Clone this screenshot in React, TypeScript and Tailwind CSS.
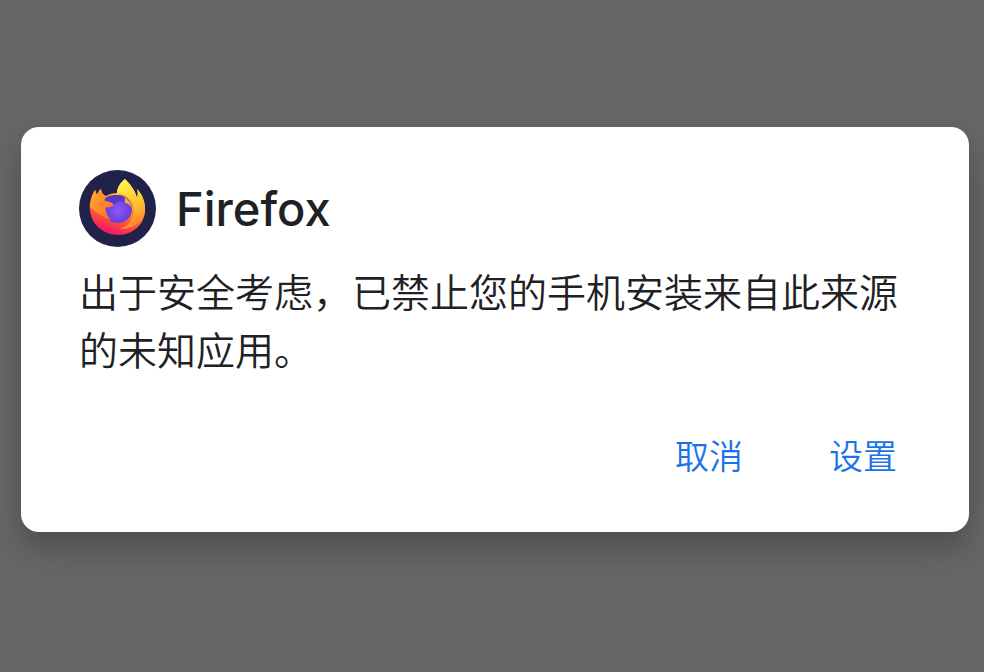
import React from "react";

function FirefoxLogo() {
  return (
    <svg width="77" height="77" viewBox="0 0 77 77" className="shrink-0">
      <defs>
        <linearGradient id="body" x1="0.7" y1="0.05" x2="0.35" y2="1">
          <stop offset="0" stopColor="#ffe226" />
          <stop offset="0.4" stopColor="#ffa02e" />
          <stop offset="0.72" stopColor="#ff4f3a" />
          <stop offset="1" stopColor="#f0106e" />
        </linearGradient>
        <linearGradient id="tail" x1="0.35" y1="0" x2="0.6" y2="1">
          <stop offset="0" stopColor="#fff44f" />
          <stop offset="0.55" stopColor="#ffc42e" />
          <stop offset="1" stopColor="#ff7a2c" />
        </linearGradient>
        <linearGradient id="fox" x1="0" y1="0" x2="1" y2="0.7">
          <stop offset="0" stopColor="#ffb02e" />
          <stop offset="1" stopColor="#ff6d2a" />
        </linearGradient>
        <radialGradient id="globe" cx="0.5" cy="0.55" r="0.65">
          <stop offset="0" stopColor="#8f55f5" />
          <stop offset="0.65" stopColor="#6a42dc" />
          <stop offset="1" stopColor="#4c2fb4" />
        </radialGradient>
      </defs>
      <circle cx="38.5" cy="38.5" r="38.5" fill="#20224a" />
      <path
        d="M46 9C41 13 38 18 38 23C34 23 30 24 27 26C24 25 22 22 22 19C20 20 19 23 18 25L16 20C12 26 10 33 11 40C12 54 24 65 39 65C54 65 66 54 66 40C66 31 63 24 58 19C59 22 59 25 58 28C56 20 51 14 46 9Z"
        fill="url(#body)"
      />
      <path
        d="M46 9C41 13 38 18 38 23C46 23 54 29 55 38C56 47 50 56 41 59C52 60 63 53 66 42C67 32 63 24 58 19C59 22 59 25 58 28C56 20 51 14 46 9Z"
        fill="url(#tail)"
      />
      <circle cx="39" cy="39" r="14" fill="url(#globe)" />
      <path
        d="M16 20L18 25C19 23 20 20 22 19C22 22 24 25 27 26C26 28 25 30 26 31C30 31 33 32 35 35C32 37 29 38 27 37C26 41 28 46 32 50C24 47 16 42 11 37C12 31 13 25 16 20Z"
        fill="url(#fox)"
      />
      <path d="M45 27C49 29 52 33 53 38C51 35 48 33 45 32C46 31 46 29 45 27Z" fill="#ffa52e" />
      <path d="M28 27C32 25 38 24 45 27C46 29 46 31 45 32C41 30 37 31 35 35C33 32 30 31 26 31C25 30 26 28 28 27Z" fill="#5b34c8" />
    </svg>
  );
}

export default function App() {
  return (
    <div className="h-[672px] w-[984px] overflow-hidden bg-[#666666] px-[21px] pt-[127px]">
      <div className="flex h-[405px] w-[948px] flex-col rounded-[18px] bg-white pl-[58px] pr-[70px] pt-[43px] shadow-[0_16px_30px_rgba(0,0,0,0.24)]">
        <div className="flex items-center gap-[20px]">
          <FirefoxLogo />
          <span className="font-['Inter',sans-serif] text-[47px] font-medium leading-[77px] text-[#202124]">
            Firefox
          </span>
        </div>
        <p className="mt-[14px] font-['Noto_Sans_CJK_SC',sans-serif] text-[39px] font-[350] leading-[58px] text-[#202124]">
          {"出于安全考虑\uFF0C已禁止您的手机安装来自此来源的未知应用。"}
        </p>
        <div className="mt-[54px] flex justify-end gap-[86px] pr-[2px] font-['Noto_Sans_CJK_SC',sans-serif] text-[34px] font-[350] leading-[48px] text-[#1a73e8]">
          <span>取消</span>
          <span>设置</span>
        </div>
      </div>
    </div>
  );
}
